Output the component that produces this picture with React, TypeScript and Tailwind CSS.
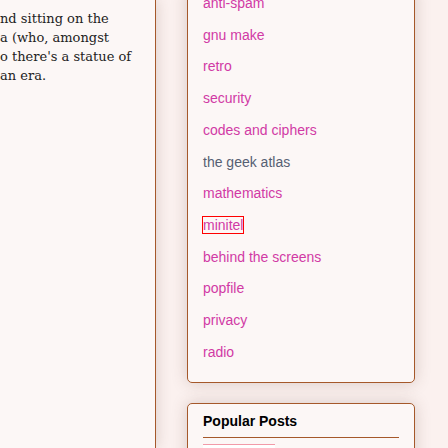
import React from 'react';

const labels = [
  'anti-spam',
  'gnu make',
  'retro',
  'security',
  'codes and ciphers',
  'the geek atlas',
  'mathematics',
  'minitel',
  'behind the screens',
  'popfile',
  'privacy',
  'radio',
];

const bodyLines = [
  'nd sitting on the',
  'a (who, amongst',
  "o there's a statue of",
  'an era.',
];

const App = () => {
  return (
    <div className="w-[448px] h-[448px] overflow-hidden flex bg-[#fbf1ef] font-['Liberation_Sans',Arial,sans-serif]">
      {/* Main column */}
      <div className="w-[156px] shrink-0 h-full bg-[#fcf7f6] border-r border-[#a5582a] shadow-[0_0_14px_rgba(90,60,50,0.22)] relative z-10">
        <div className="pt-[9px] text-[13px] leading-[19px] text-[#222222] font-['DejaVu_Serif',serif] whitespace-nowrap">
          {bodyLines.map((line) => (
            <div key={line}>{line}</div>
          ))}
        </div>
      </div>

      {/* Sidebar */}
      <div className="ml-[31px] w-[228px] shrink-0 flex flex-col">
        {/* Labels widget */}
        <div className="-mt-[13px] bg-[#fcf7f6] border border-[#a5582a] rounded-[5px] shadow-[0_0_16px_rgba(90,60,50,0.22)] px-[15px] pb-[14px] text-[14px] leading-[19.7px]">
          {labels.map((label) =>
            label === 'the geek atlas' ? (
              <div key={label} className="py-[6px] text-[#566073]">
                {label}
              </div>
            ) : label === 'minitel' ? (
              <div key={label} className="py-[6px] text-[#d13aa5]">
                <span className="outline outline-1 outline-[#ff0000]">{label}</span>
              </div>
            ) : (
              <div key={label} className="py-[6px] text-[#d13aa5]">
                {label}
              </div>
            )
          )}
        </div>

        {/* Popular posts widget */}
        <div className="mt-[20px] bg-[#fcf7f6] border border-[#a5582a] rounded-[5px] shadow-[0_0_16px_rgba(90,60,50,0.22)] px-[15px] pt-[7px]">
          <h2 className="text-[14px] font-bold leading-[20px] text-black pb-[6px] border-b border-[#a5582a]">
            Popular Posts
          </h2>
          <div className="mt-[6px] flex gap-[9px]">
            <div className="w-[72px] h-[48px] bg-white border-t border-[#f29aa8] shrink-0" />
            <div className="text-[14px] leading-[18px] text-[#d13aa5] pt-[1px]">
              Minitel in the Museum
            </div>
          </div>
        </div>
      </div>
    </div>
  );
};

export default App;
